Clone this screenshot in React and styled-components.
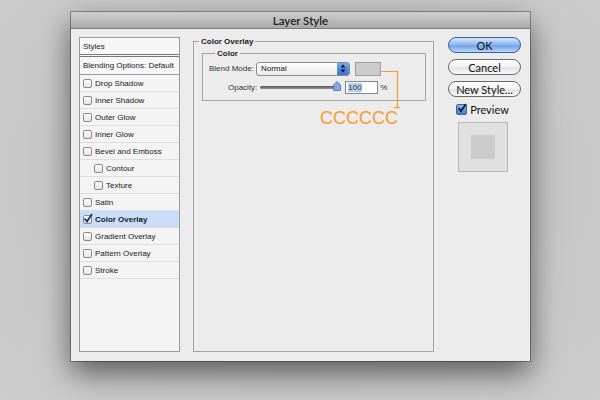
import React from "react";
import styled, { createGlobalStyle } from "styled-components";

const Global = createGlobalStyle`
  html, body { margin: 0; padding: 0; }
  body {
    width: 600px; height: 400px; overflow: hidden;
    background: radial-gradient(ellipse at 50% 45%, #b9b9b9 0%, #c6c6c6 55%, #cdcdcd 100%);
    font-family: "Liberation Sans", "DejaVu Sans", sans-serif;
  }
`;

const Stage = styled.div`
  width: 600px; height: 400px;
  padding: 12px 0 0 71px;
  box-sizing: border-box;
`;

const Window = styled.div`
  width: 459px; height: 349px;
  background: #ececec;
  display: flex; flex-direction: column;
  box-shadow: 0 12px 28px rgba(0,0,0,0.55), 0 0 0 1px #8a8a8a;
`;

const TitleBar = styled.div`
  height: 16px;
  background: linear-gradient(#cfcfcf, #a9a9a9);
  border-bottom: 1px solid #7d7d7d;
  display: flex; align-items: center; justify-content: center;
  font-size: 11.5px; color: #222;
  font-family: "Lato", "DejaVu Sans", sans-serif;
  font-weight: 600;
`;

const Body = styled.div`
  flex: 1;
  display: flex;
  padding: 8px 9px 9px 8px;
  min-height: 0;
  position: relative;
`;

const StylesList = styled.div`
  width: 99px;
  border: 1px solid #9a9a9a;
  background: #f4f4f4;
  display: flex; flex-direction: column;
  font-size: 8px; color: #1a1a1a;
  white-space: nowrap;
`;

const HeadRow = styled.div`
  height: ${(p) => (p.double ? 16 : 17)}px; display: flex; align-items: center;
  padding-left: 3px;
  background: #f7f7f7;
  border-bottom: ${(p) => (p.double ? "3px double #777" : "1px solid #9a9a9a")};
`;

const Row = styled.div`
  height: 16px; display: flex; align-items: center; gap: 3px;
  padding-left: ${(p) => (p.indent ? 14 : 3)}px;
  border-bottom: 1px solid #dedede;
  background: ${(p) => (p.active ? "#c8ddf8" : "transparent")};
  font-weight: ${(p) => (p.active ? 700 : 400)};
`;

const Box = styled.span`
  width: 7px; height: 7px;
  border: 1px solid #8a8a8a; border-radius: 2px;
  background: linear-gradient(#fff, #e4e4e4);
  position: relative;
  flex: none;
`;

const Tick = styled.svg`
  position: absolute; left: -1px; top: -3px;
`;

const Check = ({ on }) => (
  <Box>
    {on && (
      <Tick width="10" height="10" viewBox="0 0 10 10">
        <path d="M1.5 5.5 L4 8.5 L9 1" fill="none" stroke="#1c2b5a" strokeWidth="1.7" />
      </Tick>
    )}
  </Box>
);

const Middle = styled.div`
  margin-left: 13px;
  width: 241px;
  display: flex; flex-direction: column;
`;

const Fieldset = styled.fieldset`
  margin: 0; padding: 0 7px 0 8px;
  border: 1px solid #a4a4a4;
  flex: 1;
  min-width: 0;
`;

const Legend = styled.legend`
  font-size: 8px; font-weight: 700; color: #222;
  padding: 0 2px; margin-left: ${(p) => p.offset || 0}px;
`;

const InnerFieldset = styled.fieldset`
  margin: 3px 0 0 0;
  padding: 3px 6px 6px 6px;
  border: 1px solid #a4a4a4;
  height: 41px;
  min-width: 0;
`;

const Line = styled.div`
  display: flex; align-items: center; gap: 2px;
  height: 15px; margin-bottom: 4px;
  font-size: 8px; color: #333;
  padding-left: ${(p) => p.pad || 0}px;
`;

const Select = styled.div`
  width: 94px; height: 14px;
  border: 1px solid #8c8c8c; border-radius: 3px;
  background: linear-gradient(#fff, #ececec);
  display: flex; align-items: center; justify-content: space-between;
  padding-left: 4px; box-sizing: border-box;
  font-size: 8px; color: #111;
  overflow: hidden;
`;

const Stepper = styled.div`
  width: 12px; height: 14px;
  background: linear-gradient(#7aaef0, #2f6fd6);
  display: flex; align-items: center; justify-content: center;
`;

const Swatch = styled.div`
  width: 26px; height: 14px; margin-left: 3px;
  background: #cccccc; border: 1px solid #9e9e9e;
  box-sizing: border-box;
`;

const Track = styled.div`
  width: 78px; height: 3px; margin-left: 1px;
  background: linear-gradient(#555, #999);
  border-radius: 2px; position: relative;
`;

const Thumb = styled.svg`
  position: absolute; right: -3px; top: -5px;
`;

const NumInput = styled.div`
  width: 33px; height: 13px; margin-left: 5px;
  border: 1px solid #888; background: #fff;
  box-sizing: border-box; font-size: 8px;
  display: flex; align-items: center; padding-left: 2px;
`;

const Sel = styled.span`
  background: #b5d0f5;
`;

const Callout = styled.div`
  position: absolute; left: 249px; top: 38px;
  width: 80px; height: 64px;
  pointer-events: none;
`;

const CalloutLines = styled.svg`
  position: absolute; left: 0; top: 0;
`;

const CalloutText = styled.span`
  position: absolute; left: 0px; top: 42px;
  font-family: "Liberation Sans", sans-serif;
  font-size: 18px; line-height: 18px; color: #ff9a2e;
`;

const Buttons = styled.div`
  margin-left: 14px;
  width: 73px;
  display: flex; flex-direction: column; align-items: center;
  gap: 6px;
`;

const Button = styled.div`
  width: 73px; height: 16px; box-sizing: border-box;
  border-radius: 8px;
  border: 1px solid ${(p) => (p.primary ? "#3b5e9c" : "#6a6a6a")};
  background: ${(p) =>
    p.primary
      ? "linear-gradient(#d6e6fb 0%, #8ab6ee 50%, #6ea2e9 55%, #b9d6fa 100%)"
      : "linear-gradient(#ffffff 0%, #f2f2f2 50%, #e2e2e2 55%, #fbfbfb 100%)"};
  display: flex; align-items: center; justify-content: center;
  font-size: 11px; color: #111;
  font-family: "Lato", "DejaVu Sans", sans-serif;
`;

const PreviewLabel = styled.label`
  display: flex; align-items: center; gap: 3px;
  font-size: 11px; color: #111;
  font-family: "Lato", "DejaVu Sans", sans-serif;
  margin-left: -4px;
`;

const BlueBox = styled.span`
  width: 11px; height: 11px; border-radius: 2px;
  background: linear-gradient(#8cb8f2, #3d7bd8);
  border: 1px solid #44618f; box-sizing: border-box;
  position: relative;
`;

const PreviewBox = styled.div`
  width: 50px; height: 50px; box-sizing: border-box;
  border: 1px solid #b8b8b8; background: #e0e0e0;
  display: flex; align-items: center; justify-content: center;
  margin-left: -4px;
`;

const PreviewInner = styled.div`
  width: 24px; height: 24px; background: #cccccc;
`;

const items = [
  { t: "Drop Shadow" },
  { t: "Inner Shadow" },
  { t: "Outer Glow" },
  { t: "Inner Glow" },
  { t: "Bevel and Emboss" },
  { t: "Contour", i: true },
  { t: "Texture", i: true },
  { t: "Satin" },
  { t: "Color Overlay", on: true },
  { t: "Gradient Overlay" },
  { t: "Pattern Overlay" },
  { t: "Stroke" },
];

export default function App() {
  return (
    <>
      <Global />
      <Stage>
        <Window>
          <TitleBar>Layer Style</TitleBar>
          <Body>
            <StylesList>
              <HeadRow double>Styles</HeadRow>
              <HeadRow>Blending Options: Default</HeadRow>
              {items.map((it) => (
                <Row key={it.t} indent={it.i} active={it.on}>
                  <Check on={it.on} />
                  {it.t}
                </Row>
              ))}
            </StylesList>
            <Middle>
              <Fieldset>
                <Legend offset={-3}>Color Overlay</Legend>
                <InnerFieldset>
                  <Legend offset={6}>Color</Legend>
                  <Line>
                    Blend Mode:
                    <Select>
                      Normal
                      <Stepper>
                        <svg width="6" height="9" viewBox="0 0 6 9">
                          <path d="M3 0.5 L5.5 3.5 H0.5Z M3 8.5 L5.5 5.5 H0.5Z" fill="#111" />
                        </svg>
                      </Stepper>
                    </Select>
                    <Swatch />
                  </Line>
                  <Line pad={19}>
                    Opacity:
                    <Track>
                      <Thumb width="8" height="10" viewBox="0 0 8 10">
                        <path d="M4 0.5 L7.5 4 V9.5 H0.5 V4Z" fill="#7fa8e6" stroke="#4a6fa8" strokeWidth="0.8" />
                      </Thumb>
                    </Track>
                    <NumInput><Sel>100</Sel></NumInput>
                    %
                  </Line>
                </InnerFieldset>
              </Fieldset>
            </Middle>
            <Buttons>
              <Button primary>OK</Button>
              <Button>Cancel</Button>
              <Button>New Style...</Button>
              <PreviewLabel>
                <BlueBox>
                  <Tick width="10" height="10" viewBox="0 0 10 10" style={{ left: 0, top: -2 }}>
                    <path d="M1.5 5 L4 8 L9 1" fill="none" stroke="#0d1a3a" strokeWidth="1.8" />
                  </Tick>
                </BlueBox>
                Preview
              </PreviewLabel>
              <PreviewBox>
                <PreviewInner />
              </PreviewBox>
            </Buttons>
            <Callout>
              <CalloutLines width="80" height="64" viewBox="0 0 80 64">
                <path d="M60 4.5 H77.5 V40" fill="none" stroke="#ff9a2e" strokeWidth="1.2" />
                <path d="M74 40.5 H80" stroke="#ff9a2e" strokeWidth="1.2" />
              </CalloutLines>
              <CalloutText>CCCCCC</CalloutText>
            </Callout>
          </Body>
        </Window>
      </Stage>
    </>
  );
}
